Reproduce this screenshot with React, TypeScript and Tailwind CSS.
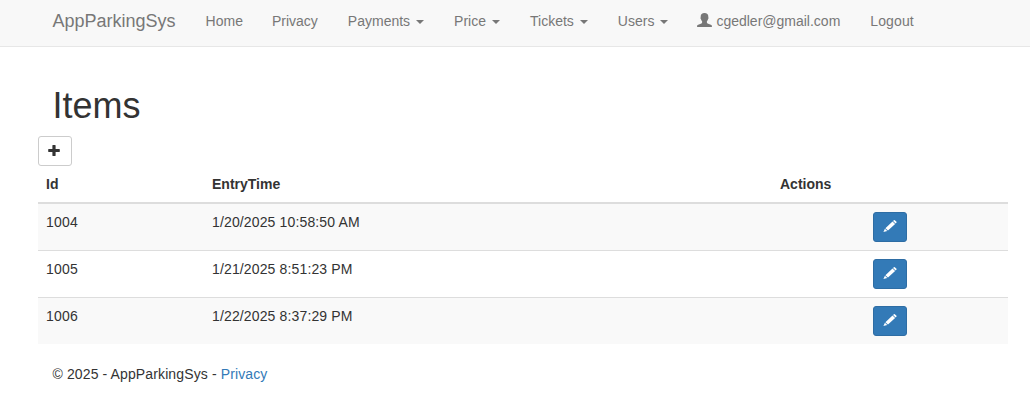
import type { ReactNode } from "react";

const rows = [
  { id: "1004", entry: "1/20/2025 10:58:50 AM" },
  { id: "1005", entry: "1/21/2025 8:51:23 PM" },
  { id: "1006", entry: "1/22/2025 8:37:29 PM" },
];

function PlusIcon() {
  return (
    <svg viewBox="0 0 12 12" className="mr-0.5 h-3 w-3" fill="currentColor">
      <path d="M4.800 0h2.400q.4 0 .4.400v3.600h3.800q.4 0 .4.400v2.200q0 .4-.4.400H7.600v3.600q0 .4-.4.400H4.800q-.4 0-.4-.4V7H.600q-.4 0-.4-.4V4.400q0-.4.4-.4h3.800V.400Q4.400 0 4.800 0z" />
    </svg>
  );
}

function PencilIcon() {
  return (
    <svg viewBox="0 0 14 12" className="mb-0.5 h-3 w-3.5" fill="currentColor">
      <path d="M10.900.2q.5-.4.900 0l1.700 1.500q.4.400 0 .8l-.9.900-2.600-2.300zM9.500 1.500l2.600 2.400-7.100 6.700-2.600-2.400zM1.900 8.700l2.400 2.300L.4 12z" />
    </svg>
  );
}

function UserIcon() {
  return (
    <svg viewBox="0 0 15 14" className="h-3.5 w-[15px]" fill="currentColor">
      <path d="M7.500 0C10 0 11.300 1.300 11.300 3.400c0 .5 0 .8.100 1.100.3.500.1 1.200-.3 1.500-.2.900-.6 1.600-1.200 2.300v1.200c0 .5.200.7.700.9l3.200 1.300c.8.300 1.100.7 1.100 1.400v.9H.1v-.9c0-.7.3-1.100 1.100-1.400l3.200-1.300c.5-.2.700-.4.700-.9V8.300C4.500 7.600 4.100 6.900 3.900 6c-.4-.3-.6-1-.3-1.500.1-.3.100-.6.100-1.100C3.700 1.300 5 0 7.500 0z" />
    </svg>
  );
}

function NavLink({ children, caret = false }: { children: ReactNode; caret?: boolean }) {
  return (
    <a href="#" className="flex items-center px-[15px]">
      {children}
      {caret && (
        <span className="mt-0.5 ml-1.5 h-0 w-0 border-x-4 border-t-4 border-x-transparent border-t-[#777]" />
      )}
    </a>
  );
}

export default function App() {
  return (
    <div className="min-h-screen bg-white font-['Liberation_Sans',Arial,sans-serif] text-[14px] leading-5 text-[#333]">
      <nav className="flex h-[47px] border-b border-[#e7e7e7] bg-[#f8f8f8] pt-[11px] pb-[15px] pl-[37.5px] text-[#777]">
        <a href="#" className="px-[15px] text-[18px]">AppParkingSys</a>
        <NavLink><span className="-mr-px">Home</span></NavLink>
        <NavLink>Privacy</NavLink>
        <NavLink caret>Payments</NavLink>
        <NavLink caret>Price</NavLink>
        <NavLink caret>Tickets</NavLink>
        <NavLink caret>Users</NavLink>
        <NavLink>
          <span className="mr-1 -ml-px -mt-0.5"><UserIcon /></span>
          cgedler@gmail.com
        </NavLink>
        <NavLink><span className="tracking-[0.12px]">Logout</span></NavLink>
      </nav>
      <main className="pt-[39.4px] pr-[22px] pl-[38px]">
        <h1 className="mb-2.5 pl-[14.5px] text-[36px] leading-[39.6px] font-normal">Items</h1>
        <button aria-label="Add" className="flex h-[30px] w-[34px] items-center justify-center rounded-[3px] border border-[#ccc] bg-white">
          <PlusIcon />
        </button>
        <table className="w-full table-fixed border-separate border-spacing-0">
          <colgroup>
            <col className="w-[166px]" />
            <col className="w-[568px]" />
            <col />
          </colgroup>
          <thead>
            <tr className="text-left">
              <th className="border-b-2 border-[#ddd] p-2">Id</th>
              <th className="border-b-2 border-[#ddd] p-2">EntryTime</th>
              <th className="border-b-2 border-[#ddd] p-2">Actions</th>
            </tr>
          </thead>
          <tbody>
            {rows.map((row) => (
              <tr key={row.id} className="group align-top odd:bg-[#f9f9f9]">
                <td className="border-t border-[#ddd] p-2 tracking-[0.2px] group-first:border-t-0">{row.id}</td>
                <td className="border-t border-[#ddd] p-2 tracking-[0.14px] group-first:border-t-0">{row.entry}</td>
                <td className="border-t border-[#ddd] p-2 group-first:border-t-0">
                  <button aria-label="Edit" className="mx-auto flex h-[30px] w-[34px] items-center justify-center rounded-[3px] border border-[#2e6da4] bg-[#337ab7] text-white">
                    <PencilIcon />
                  </button>
                </td>
              </tr>
            ))}
          </tbody>
        </table>
      </main>
      <footer className="pt-5 pl-[52.5px] tracking-[0.12px]">
        © 2025 - AppParkingSys - <a href="#" className="text-[#337ab7]">Privacy</a>
      </footer>
    </div>
  );
}
